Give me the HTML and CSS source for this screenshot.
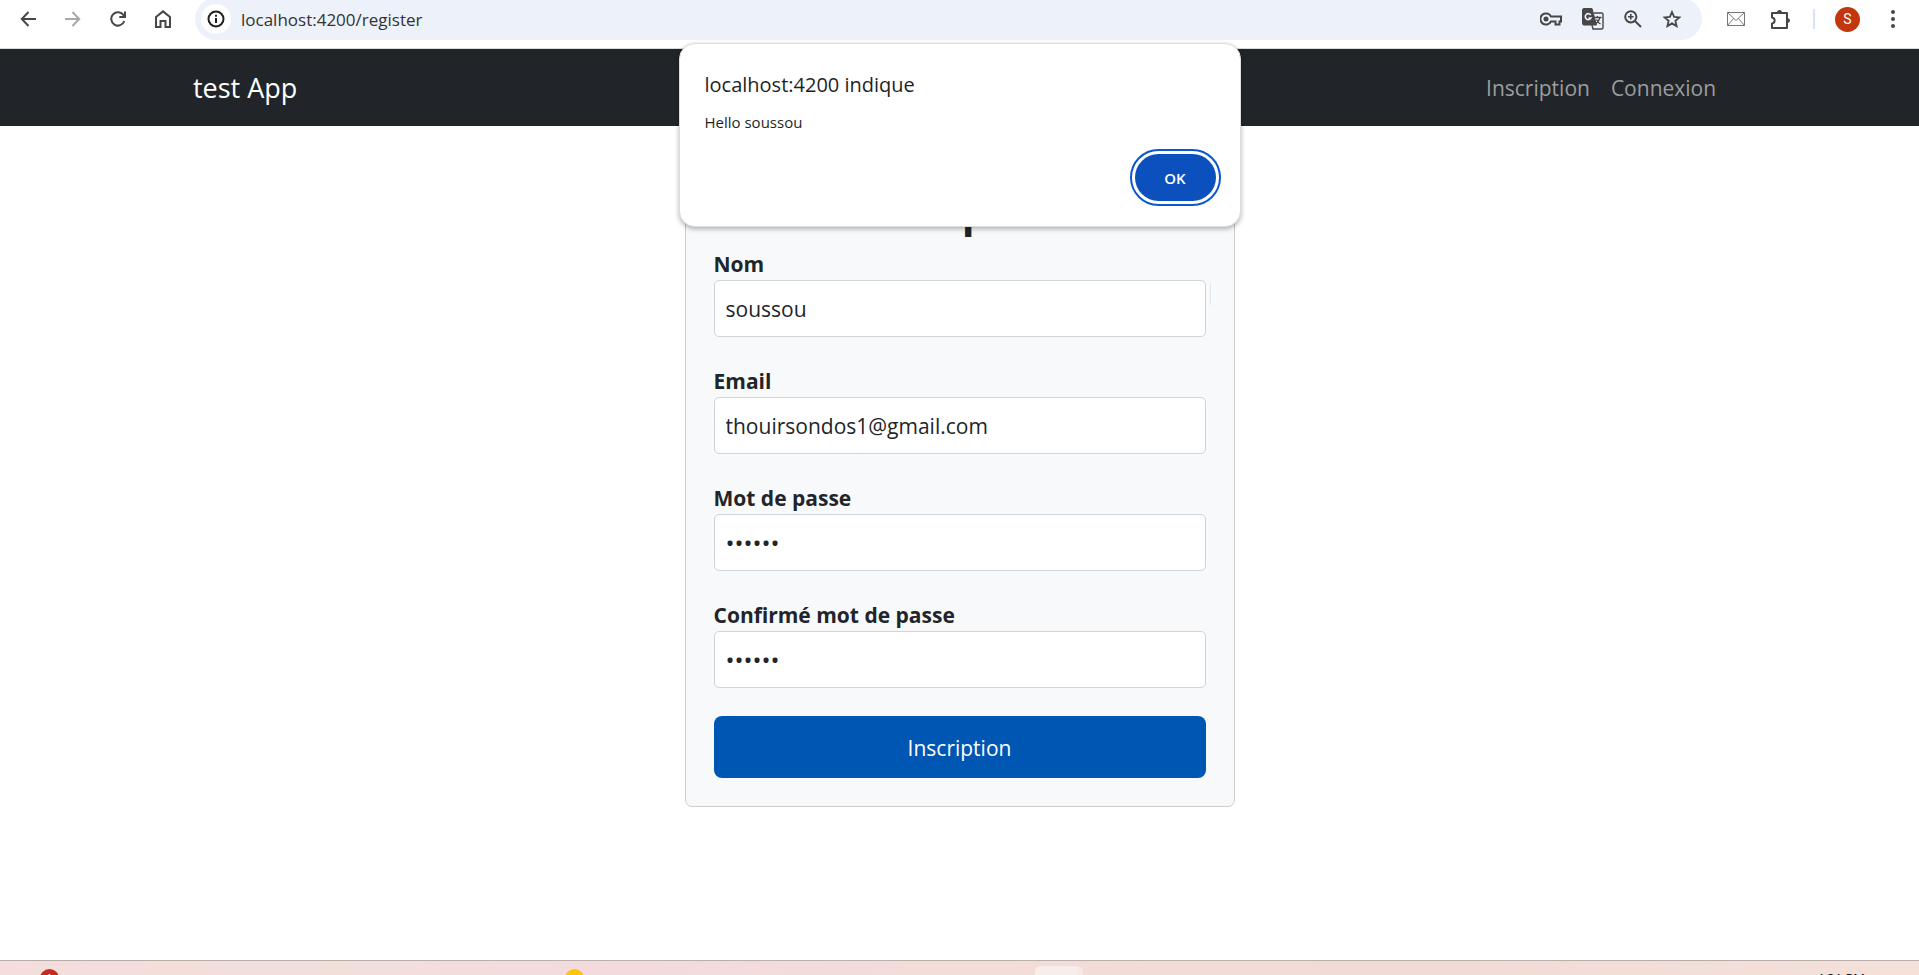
FILE: index.html
```html
<!DOCTYPE html>
<html lang="fr">
<head>
<meta charset="utf-8">
<title>test App</title>
<link rel="stylesheet" href="styles.css">
</head>
<body>
<div class="window">
  <header class="toolbar">
    <div class="nav-buttons">
      <button class="icon-button" type="button" aria-label="Précédent">
        <svg width="16" height="16" viewBox="0 0 16 16" fill="none" stroke="currentColor" stroke-width="2"><path d="M8.5 1 1.8 8l6.700 7M2 8h14"/></svg>
      </button>
      <button class="icon-button disabled" type="button" aria-label="Suivant">
        <svg width="16" height="16" viewBox="0 0 16 16" fill="none" stroke="currentColor" stroke-width="2"><path d="M7.5 1l6.700 7-6.700 7M14 8H0"/></svg>
      </button>
      <button class="icon-button" type="button" aria-label="Actualiser">
        <svg width="16" height="16" viewBox="0 0 16 16" fill="none" stroke="currentColor" stroke-width="2"><path d="M14.3 10A6.7 6.7 0 1 1 13.6 4.3L15 6M15 .5V6H9.3"/></svg>
      </button>
      <button class="icon-button" type="button" aria-label="Accueil">
        <svg width="16" height="18" viewBox="0 0 16 18" fill="none" stroke="currentColor" stroke-width="2"><path d="M1 7l7-5.600L15 7v10h-4.500v-6h-5v6H1z"/></svg>
      </button>
    </div>
    <div class="address-bar">
      <button class="site-info" type="button" aria-label="Informations du site">
        <svg width="18" height="18" viewBox="0 0 18 18" fill="none" stroke="currentColor" stroke-width="2"><circle cx="9" cy="9" r="7.500"/><path d="M9 8v5M9 4.800v2"/></svg>
      </button>
      <input class="url" type="text" aria-label="Adresse" value="localhost:4200/register">
      <div class="page-actions">
        <svg width="22" height="16" viewBox="1 0 22 16" fill="none" stroke="currentColor" stroke-width="2"><path d="M12 5.500A5.600 5.600 0 1 0 12 10.500h4.500v3h4v-3H22v-5z"/><circle cx="7" cy="8" r="2.500" fill="currentColor" stroke="none"/></svg>
        <svg width="22" height="22" viewBox="0 0 22 22" fill="none" stroke="currentColor"><path d="M12 5h7.500A1.500 1.500 0 0 1 21 6.500v13a1.500 1.500 0 0 1-1.500 1.500H11l-1-4" stroke-width="1.400"/><path d="M2 .5h8L14.500 17H2A1.500 1.500 0 0 1 .5 15.500V2A1.500 1.500 0 0 1 2 .5z" fill="currentColor"/><path d="M8.800 7A3 3 0 1 0 9 10H6.500" stroke="#edf1fa" stroke-width="1.600"/><path d="M12.500 9.500h7M15.500 8v1.500M18 9.500c-.6 3-2.500 5-4.500 6.500M14.500 11.500c.8 2 2.200 3.600 4 4.500" stroke-width="1.300"/></svg>
        <svg width="18" height="18" viewBox="0 0 18 18" fill="none" stroke="currentColor" stroke-width="2"><circle cx="6.800" cy="6.800" r="5.600"/><path d="M11 11l6 6"/><path d="M6.800 4v5.600M4 6.800h5.600" stroke-width="1.600"/></svg>
        <svg width="20" height="18" viewBox="0 0 20 18" fill="none" stroke="currentColor" stroke-width="1.800"><path d="M10 2l2.100 4.900 5.300.5-4 3.500 1.200 5.200L10 13.400l-4.600 2.700 1.200-5.200-4-3.500 5.300-.5z"/></svg>
      </div>
    </div>
    <div class="extensions">
      <button class="icon-button muted" type="button" aria-label="Courrier">
        <svg width="18" height="14" viewBox="0 0 18 14" fill="none" stroke="currentColor"><path d="M.5.5h17v13H.5zM.5.500 9 8.500 17.500.5M.5 13.500l6-7M17.500 13.500l-6-7"/></svg>
      </button>
      <button class="icon-button" type="button" aria-label="Extensions">
        <svg width="21" height="21" viewBox="0 0 21 21"><path d="M2 4h15v15H2v-4.500c3.500-.5 3.500-5.500 0-6z" fill="none" stroke="currentColor" stroke-width="2" stroke-linejoin="round"/><path d="M7 3.500a2.500 2.500 0 0 1 5 0zM17.500 9a2.500 2.500 0 0 1 0 5z" fill="currentColor"/></svg>
      </button>
      <span class="separator"></span>
      <button class="avatar" type="button">S</button>
      <button class="icon-button" type="button" aria-label="Menu">
        <svg width="4" height="18" viewBox="0 0 4 18" fill="currentColor"><circle cx="2" cy="2" r="2"/><circle cx="2" cy="9" r="2"/><circle cx="2" cy="16" r="2"/></svg>
      </button>
    </div>
  </header>

  <div class="page">
    <nav class="navbar">
      <div class="container">
        <a class="brand" href="#">test App</a>
        <div class="links">
          <a href="#">Inscription</a>
          <a href="#">Connexion</a>
        </div>
      </div>
    </nav>
    <main class="content">
      <form class="card">
        <h1 class="title">Inscription</h1>
        <div class="field marked">
          <label for="name">Nom</label>
          <input id="name" type="text" value="soussou">
        </div>
        <div class="field">
          <label for="email">Email</label>
          <input id="email" type="email" value="thouirsondos1@gmail.com">
        </div>
        <div class="field">
          <label for="password">Mot de passe</label>
          <input id="password" type="password" value="soussu">
        </div>
        <div class="field">
          <label for="confirm">Confirmé mot de passe</label>
          <input id="confirm" type="password" value="soussu">
        </div>
        <button class="submit" type="button">Inscription</button>
      </form>
    </main>
  </div>

  <footer class="taskbar">
    <span class="badge badge-red">1</span>
    <span class="badge badge-yellow"></span>
    <span class="task"></span>
    <time class="clock">4:31 PM</time>
  </footer>

  <div class="dialog" role="alertdialog" aria-labelledby="dialog-title">
    <h2 id="dialog-title" class="dialog-title">localhost:4200 indique</h2>
    <p class="dialog-text">Hello soussou</p>
    <div class="dialog-actions">
      <button class="ok" type="button">OK</button>
    </div>
  </div>
</div>
</body>
</html>
```
FILE: styles.css
```css
* { box-sizing: border-box; }

body {
  margin: 0;
  background: #fff;
  color: #212529;
  font-family: "Open Sans", "Noto Sans", sans-serif;
  font-size: 21px;
}

button, input { font: inherit; color: inherit; }
button { border: 0; padding: 0; background: none; }
svg { display: block; }

.window {
  position: relative;
  display: flex;
  flex-direction: column;
  height: 100vh;
  overflow: hidden;
}

/* Browser toolbar */
.toolbar {
  display: flex;
  align-items: flex-start;
  height: 49px;
  flex: none;
  border-bottom: 1px solid #d3dbd9;
  color: #474747;
}

.nav-buttons {
  display: flex;
  align-items: center;
  height: 38px;
  padding-left: 5px;
  margin-right: 10px;
}

.icon-button {
  display: flex;
  align-items: center;
  justify-content: center;
  width: 45px;
  height: 38px;
}

.disabled { color: #a8a8a8; }
.muted { color: #777; }

.address-bar {
  display: flex;
  align-items: center;
  flex: 1;
  height: 42px;
  margin-top: -2px;
  padding: 0 20px 0 6px;
  border-radius: 21px;
  background: #edf1fa;
}

.site-info {
  display: flex;
  align-items: center;
  justify-content: center;
  width: 30px;
  height: 30px;
  border-radius: 50%;
  background: #fff;
  color: #1f1f1f;
}

.url {
  flex: 1;
  min-width: 0;
  margin-left: 10px;
  padding: 0;
  border: 0;
  background: none;
  font-size: 17px;
  color: #333;
}

.page-actions {
  display: flex;
  align-items: center;
  gap: 20px;
}

.extensions {
  display: flex;
  align-items: center;
  height: 38px;
  padding: 0 4px 0 11px;
}

.separator {
  width: 2px;
  height: 20px;
  margin: 0 20px 0 10px;
  background: #d3e3fd;
}

.avatar {
  width: 25px;
  height: 25px;
  margin-right: 10px;
  border-radius: 50%;
  background: #c2370d;
  color: #fff;
  font-family: Roboto, sans-serif;
  font-size: 14px;
}

/* Application */
.page { flex: 1; min-height: 0; overflow: hidden; }

.navbar { background: #212529; }

.container {
  display: flex;
  align-items: center;
  justify-content: space-between;
  height: 77px;
  margin: 0 10%;
  padding: 0 11px 0 1px;
}

.navbar a { text-decoration: none; }
.brand { color: #fff; font-size: 27px; }
.links { display: flex; gap: 21px; }
.links a { color: #9b9d9e; }

.content {
  display: flex;
  justify-content: center;
  padding-top: 28px;
}

.card {
  width: 550px;
  padding: 28px;
  border: 1px solid #ccc;
  border-radius: 7px;
  background: #f8f9fa;
}

.title {
  margin: 0 0 9px;
  text-align: center;
  font-size: 42px;
  font-weight: 700;
  line-height: 56px;
}

.field { position: relative; margin-bottom: 28px; }

.marked::after {
  content: "";
  position: absolute;
  right: -5px;
  bottom: 32px;
  width: 1px;
  height: 22px;
  background: #dce8f5;
}

.field label {
  display: block;
  font-weight: 700;
  line-height: 32px;
}

.field input {
  display: block;
  width: 100%;
  height: 57px;
  padding: 0 11px;
  border: 1px solid #ced4da;
  border-radius: 5px;
  background: #fff;
}

.field input[type="password"] { font-size: 24px; }

.submit {
  display: block;
  width: 100%;
  height: 62px;
  padding-top: 2px;
  border-radius: 8px;
  background: #0056b3;
  color: #fff;
}

/* Alert */
.dialog {
  position: absolute;
  top: 43px;
  left: 50%;
  width: 562px;
  margin-left: -281px;
  padding: 28px 24px 25px 25px;
  border: 1px solid #dcdedd;
  border-radius: 16px;
  background: #fff;
  box-shadow: 0 2px 5px rgba(0, 0, 0, 0.3);
  color: #1f1f1f;
}

.dialog-title {
  margin: 0 0 12px;
  font-size: 20px;
  font-weight: 500;
  line-height: 26px;
}

.dialog-text { margin: 0; font-size: 15px; line-height: 24px; }

.dialog-actions {
  display: flex;
  justify-content: flex-end;
  margin-top: 20px;
}

.ok {
  width: 81px;
  height: 47px;
  border-radius: 24px;
  outline: 2px solid #0b57d0;
  outline-offset: 3px;
  background: #0c50bd;
  color: #fff;
  font-size: 15px;
  font-weight: 600;
}

/* Taskbar */
.taskbar {
  position: relative;
  flex: none;
  height: 15px;
  overflow: hidden;
  border-top: 1px solid #b9aeab;
  background: linear-gradient(90deg, #f4ddda 0%, #f2dfda 18%, #f3dbdd 31%, #f2ddd8 50%, #f1dbd6 75%, #f4e1da 100%);
}

.badge {
  position: absolute;
  top: 8px;
  width: 19px;
  height: 19px;
  border-radius: 50%;
  color: #fff;
  font-size: 12px;
  line-height: 19px;
  text-align: center;
}

.badge-red { left: 40px; background: #c42b1c; }
.badge-yellow { left: 565px; background: #ffc20e; }

.task {
  position: absolute;
  top: 5px;
  left: 1035px;
  width: 48px;
  height: 40px;
  border-right: 5px solid #f6e8e5;
  border-radius: 6px;
  background: #f9edeb;
}

.clock {
  position: absolute;
  top: 8px;
  right: 54px;
  color: #111;
  font-size: 13px;
  line-height: 18px;
}
```
